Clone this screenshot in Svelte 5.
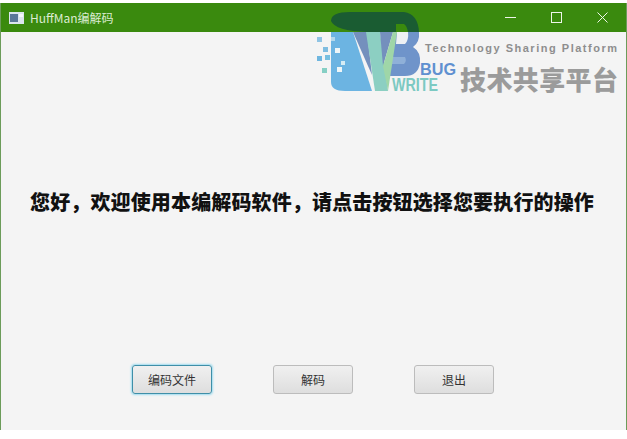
<script>
  const buttons = [
    { label: "编码文件", focused: true },
    { label: "解码", focused: false },
    { label: "退出", focused: false },
  ];

  // little pixel squares around the logo's left edge
  const pixels = [
    [317, 37, 5, "#8fc4e4"], [331, 37, 4, "#b4d9ec"],
    [323, 47, 5, "#7fbde0"], [335, 48, 5, "#eef6f8"],
    [317, 56, 5, "#6fb6df"], [325, 55, 5, "#78bfe0"],
    [322, 68, 5, "#86cfc4"], [337, 67, 5, "#eef6f8"],
    [341, 61, 4, "#d5ecf4"],
  ];
</script>

<div class="window">
  <header class="titlebar">
    <div class="title">
      <svg class="app-icon" width="15" height="12" viewBox="0 0 15 12">
        <rect width="15" height="12" fill="#dbe5ee" />
        <rect x="1" y="2" width="8" height="8" fill="#5a7898" />
        <rect x="10" y="2" width="4" height="3" fill="#f4f7fa" />
      </svg>
      <span>HuffMan编解码</span>
    </div>
    <div class="controls">
      <svg width="11" height="11" viewBox="0 0 11 11"><path d="M0 5.5H11" /></svg>
      <svg width="11" height="11" viewBox="0 0 11 11"><rect x="0.5" y="0.5" width="10" height="10" /></svg>
      <svg width="11" height="11" viewBox="0 0 11 11"><path d="M0.5 0.5L10.5 10.5M10.5 0.5L0.5 10.5" /></svg>
    </div>
  </header>

  <main class="content">
    <div class="message">您好，欢迎使用本编解码软件，请点击按钮选择您要执行的操作</div>
    <div class="actions">
      {#each buttons as btn}
        <button class="btn" class:focused={btn.focused}>{btn.label}</button>
      {/each}
    </div>
  </main>
</div>

<!-- Watermark logo lying over the window -->
<svg class="watermark" width="627" height="100" viewBox="0 0 627 100">
  <!-- dark band over the title bar -->
  <path d="M331 21Q331 12 350 12H404Q418 14 419 32H368Q335 31 331 21Z" fill="#1a5c32" />
  <path d="M396 24H404Q407 26 408 32H396Z" fill="#3a8a0e" />

  <!-- B -->
  <path d="M395 32H419Q420 42 413 47Q421 52 420 63Q418 76 405 76H388Z" fill="#6f94ca" />
  <path d="M397 32H408Q409 40 405 44H396Z" fill="#eef1f4" />
  <path d="M392 57H405Q407 61 404 64H391Z" fill="#8fb0d8" />

  <!-- W -->
  <path d="M331 32H353L372 91H345Q331 91 331 82Z" fill="#6cb4e2" />
  <path d="M353 32H367L372 75Z" fill="#7490bd" />
  <path d="M366 32H380L388 91H375Z" fill="#8ccfc2" />
  <path d="M380 32H393L383 66Z" fill="#7490bd" />
  <path d="M393 32H397L388 91L383 66Z" fill="#9fd6a8" />

  {#each pixels as [x, y, s, fill]}
    <rect {x} {y} width={s} height={s} {fill} />
  {/each}

  <text class="bug" x="420" y="75" textLength="36" lengthAdjust="spacingAndGlyphs">BUG</text>
  <text class="write" x="392" y="91" textLength="46" lengthAdjust="spacingAndGlyphs">WRITE</text>
  <text class="tagline" x="425" y="52" textLength="192">Technology Sharing Platform</text>
  <text class="slogan" x="460" y="90" textLength="158">技术共享平台</text>
</svg>

<style>
  :global(body) {
    background: #fff;
  }

  .window {
    position: relative;
    display: flex;
    flex-direction: column;
    width: 625px;
    height: 427px;
    margin-top: 3px;
    border-left: 1px solid #6c9c5a;
    border-right: 1px solid #6c9c5a;
    background: #f4f4f4;
    font-family: "Noto Sans CJK SC", "Noto Sans", sans-serif;
  }

  .titlebar {
    display: flex;
    align-items: center;
    justify-content: space-between;
    height: 29px;
    background: #3a8a0e;
    color: #dcecd2;
    font-size: 12px;
  }

  .title {
    display: flex;
    align-items: center;
    gap: 6px;
    padding-left: 8px;
  }

  .controls {
    display: flex;
    gap: 35px;
    padding-right: 18px;
  }

  .controls svg {
    fill: none;
    stroke: #eef6ea;
    stroke-width: 1;
  }

  .content {
    flex: 1;
    display: flex;
    flex-direction: column;
    padding-bottom: 36px;
  }

  .message {
    flex: 1;
    display: flex;
    align-items: center;
    justify-content: center;
    padding-top: 6px;
    padding-right: 3px;
    font-size: 20px;
    font-weight: 900;
    letter-spacing: 0.14px;
    color: #111;
  }

  .actions {
    display: flex;
    justify-content: center;
    gap: 61px;
    padding-right: 1px;
  }

  .btn {
    width: 80px;
    height: 29px;
    padding: 0;
    border: 1px solid #bcbcbc;
    border-radius: 3px;
    background: linear-gradient(#f0f0f0, #dedede);
    font-family: inherit;
    font-size: 12px;
    color: #333;
  }

  .btn.focused {
    border-color: #3f8fa8;
    box-shadow: 0 0 2px 1px #9fdcf0;
  }

  .watermark {
    position: absolute;
    top: 0;
    left: 0;
    pointer-events: none;
  }

  .bug {
    font: 700 17px "Liberation Sans", sans-serif;
    fill: #5f90d0;
  }

  .write {
    font: 700 18px "Liberation Sans", sans-serif;
    fill: #7cc9c2;
  }

  .tagline {
    font: 700 11px "Liberation Sans", sans-serif;
    fill: #8e8e8e;
  }

  .slogan {
    font: 900 26px "Noto Sans CJK SC", sans-serif;
    fill: #9b9b9b;
  }
</style>
